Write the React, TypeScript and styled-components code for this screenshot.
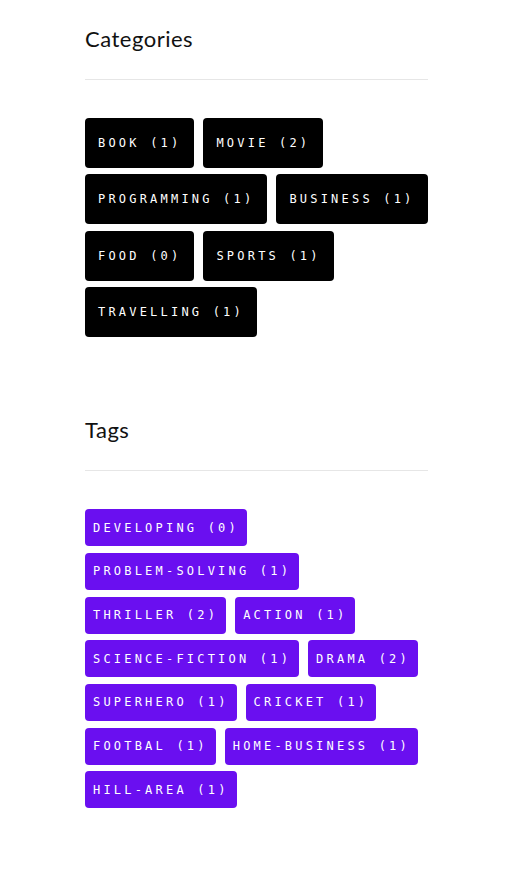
import styled, { createGlobalStyle } from "styled-components"

const categories = [
    { name: "Book", count: 1 },
    { name: "Movie", count: 2 },
    { name: "Programming", count: 1 },
    { name: "Business", count: 1 },
    { name: "Food", count: 0 },
    { name: "Sports", count: 1 },
    { name: "Travelling", count: 1 },
]

const tags = [
    { name: "developing", count: 0 },
    { name: "problem-solving", count: 1 },
    { name: "thriller", count: 2 },
    { name: "action", count: 1 },
    { name: "science-fiction", count: 1 },
    { name: "drama", count: 2 },
    { name: "superhero", count: 1 },
    { name: "cricket", count: 1 },
    { name: "footbal", count: 1 },
    { name: "home-business", count: 1 },
    { name: "hill-area", count: 1 },
]

export default function App() {
    return (
        <>
            <GlobalStyle />
            <Sidebar>
                <Widget>
                    <WidgetTitle>Categories</WidgetTitle>
                    <Divider />
                    <CategoryList>
                        {categories.map((c) => (
                            <CategoryButton key={c.name}>
                                {c.name} ({c.count})
                            </CategoryButton>
                        ))}
                    </CategoryList>
                </Widget>
                <Widget>
                    <WidgetTitle>Tags</WidgetTitle>
                    <Divider />
                    <TagList>
                        {tags.map((t) => (
                            <TagButton key={t.name}>
                                {t.name} ({t.count})
                            </TagButton>
                        ))}
                    </TagList>
                </Widget>
            </Sidebar>
        </>
    )
}

const GlobalStyle = createGlobalStyle`
    body {
        margin: 0;
        background: #ffffff;
        font-family: "Lato", "Noto Sans", sans-serif;
    }
`

const Sidebar = styled.aside`
    width: 343px;
    padding: 24px 0 60px 85px;

    display: flex;
    flex-direction: column;
    gap: 78px;
`

const Widget = styled.section`
    display: flex;
    flex-direction: column;
`

const WidgetTitle = styled.h2`
    margin: 0;
    font-size: 22px;
    line-height: 30px;
    font-weight: 400;
    letter-spacing: 0.5px;
    color: #111111;
`

const Divider = styled.hr`
    margin: 25px 0 38px;
    border: none;
    border-top: 1px solid #e6e6e6;
`

const CategoryList = styled.div`
    display: flex;
    flex-wrap: wrap;
    column-gap: 9px;
    row-gap: 6.4px;
`

const TagList = styled.div`
    display: flex;
    flex-wrap: wrap;
    column-gap: 9px;
    row-gap: 6.7px;
`

const Chip = styled.a`
    display: inline-flex;
    align-items: center;
    border-radius: 4px;
    color: #ffffff;
    font-family: "DejaVu Sans Mono", "Liberation Mono", monospace;
    font-size: 12px;
    letter-spacing: 3.2px;
    text-transform: uppercase;
    white-space: nowrap;
    cursor: pointer;
`

const CategoryButton = styled(Chip)`
    height: 50px;
    padding: 0 13px 0 13px;
    background: #000000;
`

const TagButton = styled(Chip)`
    height: 37px;
    padding: 0 8px 0 8px;
    background: #6a0ff0;
`
